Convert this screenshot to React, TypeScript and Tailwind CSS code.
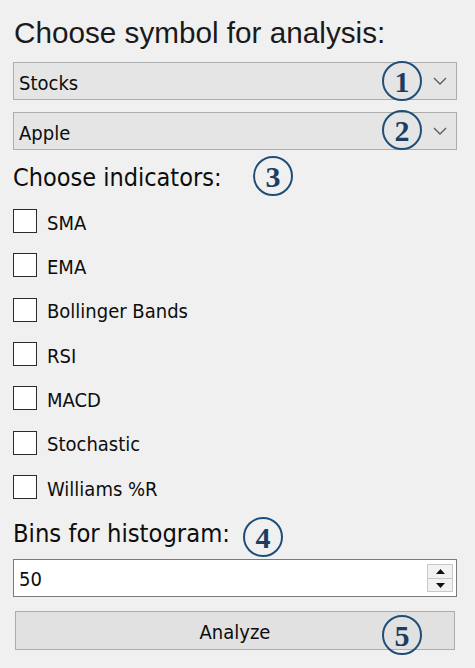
import React from "react";

const Chevron = () => (
  <svg width="14" height="8" viewBox="0 0 14 8" className="shrink-0">
    <polyline points="1,1 7,7 13,1" fill="none" stroke="#5a5a5a" strokeWidth="1.3" />
  </svg>
);

function Combo({ label, extra }: { label: string; extra?: string }) {
  return (
    <div
      className={`w-[444px] h-[38px] border border-[#adadad] bg-[#e5e5e5] flex items-center pl-[5px] pr-[9px] ${extra ?? ""}`}
    >
      <span className="flex-1 text-[20px] leading-[24px] pt-[3px] text-[#0d0d0d]">{label}</span>
      <Chevron />
    </div>
  );
}

function Check({ label }: { label: string }) {
  return (
    <div className="h-[44.33px] flex items-center">
      <div className="w-[24px] h-[24px] border-[1.5px] border-[#2a2a2a] bg-white shrink-0" />
      <span className="ml-[10px] text-[20px] leading-[24px] pt-[3px] text-[#0d0d0d]">{label}</span>
    </div>
  );
}

function Badge({ n, pos }: { n: string; pos: string }) {
  return (
    <div
      className={`absolute w-[40px] h-[40px] rounded-full border-[2.5px] border-[#1f4e79] flex items-center justify-center font-['Liberation_Serif',serif] font-bold text-[30px] leading-none text-[#1c3d60] ${pos}`}
    >
      <span className="pt-[2px]">{n}</span>
    </div>
  );
}

export default function App() {
  return (
    <div className="relative w-[475px] h-[668px] overflow-hidden bg-[#f0f0f0] pl-[13px] pt-[16px] font-['DejaVu_Sans_Condensed','DejaVu_Sans',sans-serif] [font-stretch:condensed] text-[#0d0d0d]">
      <div className="font-['Liberation_Sans',Arial,sans-serif] [font-stretch:normal] text-[29.7px] leading-[34px] text-[#1a1a1a] pl-[1px]">
        Choose symbol for analysis:
      </div>
      <div className="mt-[12px]">
        <Combo label="Stocks" />
      </div>
      <Combo label="Apple" extra="mt-[12px]" />

      <div className="mt-[13px] text-[25px] leading-[30px]">Choose indicators:</div>

      <div className="mt-[6px] flex flex-col">
        <Check label="SMA" />
        <Check label="EMA" />
        <Check label="Bollinger Bands" />
        <Check label="RSI" />
        <Check label="MACD" />
        <Check label="Stochastic" />
        <Check label="Williams %R" />
      </div>

      <div className="mt-[10px] text-[25.3px] leading-[30px]">Bins for histogram:</div>

      <div className="mt-[10px] w-[444px] h-[38px] border border-[#7a7a7a] bg-white flex items-center pl-[5px] pr-[3px]">
        <span className="flex-1 text-[20px] leading-[24px] pt-[2px]">50</span>
        <div className="w-[26px] h-[28px] flex flex-col border border-[#c8c8c8] bg-[#f2f2f2]">
          <div className="flex-1 flex items-center justify-center border-b border-[#c8c8c8]">
            <svg width="9" height="5" viewBox="0 0 9 5">
              <polygon points="0,5 4.5,0 9,5" fill="#111" />
            </svg>
          </div>
          <div className="flex-1 flex items-center justify-center">
            <svg width="9" height="5" viewBox="0 0 9 5">
              <polygon points="0,0 4.5,5 9,0" fill="#111" />
            </svg>
          </div>
        </div>
      </div>

      <button className="mt-[14px] ml-[2px] w-[440px] h-[39px] border border-[#adadad] bg-[#e1e1e1] flex items-center justify-center text-[20px] leading-[24px] text-[#0d0d0d]">
        <span className="pt-[3px]">Analyze</span>
      </button>

      <Badge n="1" pos="left-[382px] top-[61px]" />
      <Badge n="2" pos="left-[382px] top-[110px]" />
      <Badge n="3" pos="left-[253px] top-[156px]" />
      <Badge n="4" pos="left-[243px] top-[517px]" />
      <Badge n="5" pos="left-[382px] top-[615px]" />
    </div>
  );
}
